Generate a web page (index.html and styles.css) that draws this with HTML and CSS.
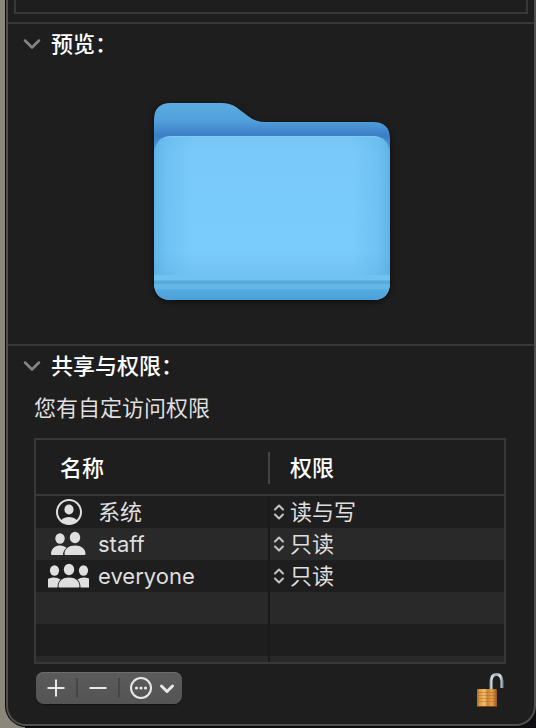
FILE: index.html
```html
<!DOCTYPE html>
<html lang="zh-CN">
<head>
<meta charset="utf-8">
<meta name="viewport" content="width=device-width, initial-scale=1">
<title>简介</title>
<link rel="stylesheet" href="styles.css">
</head>
<body>
<main class="window">
  <div class="previous-box"></div>

  <details class="section preview" open>
    <summary class="section-title">
      <svg class="chevron" viewBox="0 0 18 12" aria-hidden="true"><path d="M2 2.500 9 9.500 16 2.500"/></svg>
      预览：
    </summary>
    <div class="preview-body">
      <svg class="folder" viewBox="0 0 236 197" role="img" aria-label="文件夹">
        <defs>
          <linearGradient id="back" x1="0" y1="0" x2="0" y2="50" gradientUnits="userSpaceOnUse">
            <stop offset="0" stop-color="#5cade1"/><stop offset=".36" stop-color="#509fdb"/><stop offset=".65" stop-color="#3b7ec6"/><stop offset="1" stop-color="#4d9edb"/>
          </linearGradient>
          <linearGradient id="front" x1="0" y1="33" x2="0" y2="197" gradientUnits="userSpaceOnUse">
            <stop offset="0" stop-color="#76c5f3"/><stop offset=".1" stop-color="#79cafa"/><stop offset=".7" stop-color="#7accfc"/><stop offset=".84" stop-color="#73c3f2"/>
          </linearGradient>
          <linearGradient id="sides" x1="0" y1="0" x2="1" y2="0">
            <stop offset="0" stop-color="#3f92cf" stop-opacity=".42"/><stop offset=".05" stop-color="#4399d4" stop-opacity=".2"/><stop offset=".16" stop-color="#4399d4" stop-opacity="0"/><stop offset=".84" stop-color="#4399d4" stop-opacity="0"/><stop offset=".95" stop-color="#4399d4" stop-opacity=".2"/><stop offset="1" stop-color="#3f92cf" stop-opacity=".42"/>
          </linearGradient>
          <linearGradient id="base" x1="0" y1="0" x2="0" y2="1">
            <stop offset="0" stop-color="#58ade0"/><stop offset="1" stop-color="#4b9fd9"/>
          </linearGradient>
          <clipPath id="front-shape"><path d="M0 51Q1 33 18 33H218Q235 33 236 51V179Q236 197 218 197H18Q0 197 0 179Z"/></clipPath>
        </defs>
        <path fill="url(#back)" d="M0 17Q0 0 17 0H67Q76 0 82 4L94 13Q101 19 112 19H219Q236 19 236 36V179Q236 197 218 197H18Q0 197 0 179Z"/>
        <g clip-path="url(#front-shape)">
          <rect y="33" width="236" height="164" fill="url(#front)"/>
          <rect y="172" width="236" height="5" fill="#70c3f0"/>
          <rect y="177" width="236" height="1" fill="#63b4e3"/>
          <rect y="178" width="236" height="3" fill="#58a9dc"/>
          <rect y="181" width="236" height="5" fill="#63b6e6"/>
          <rect y="186" width="236" height="11" fill="url(#base)"/>
          <rect y="33" width="236" height="139" fill="url(#sides)"/>
        </g>
        <path class="folder-edge" d="M10 35Q13 33.500 18 33.500H218Q223 33.500 226 35"/>
      </svg>
    </div>
  </details>

  <details class="section sharing" open>
    <summary class="section-title">
      <svg class="chevron" viewBox="0 0 18 12" aria-hidden="true"><path d="M2 2.500 9 9.500 16 2.500"/></svg>
      共享与权限：
    </summary>
    <div class="sharing-body">
      <p class="note">您有自定访问权限</p>
      <table class="permissions">
        <thead>
          <tr><th scope="col">名称</th><th scope="col">权限</th></tr>
        </thead>
        <tbody>
          <tr>
            <td><div class="user">
              <svg class="user-icon" viewBox="0 0 42 28" aria-hidden="true">
                <defs><clipPath id="disc"><circle cx="21" cy="14" r="12"/></clipPath></defs>
                <circle class="ring" cx="21" cy="14" r="12"/>
                <ellipse cx="21" cy="11.500" rx="4.600" ry="5"/>
                <ellipse cx="21" cy="25" rx="9" ry="6" clip-path="url(#disc)"/>
              </svg>
              系统</div></td>
            <td><div class="access">
              <svg class="arrows" viewBox="0 0 12 18" aria-hidden="true"><path d="M2 6.500 6 2.500 10 6.500M2 11.500 6 15.500 10 11.500"/></svg>
              <select aria-label="系统的权限"><option>读与写</option><option>只读</option></select>
            </div></td>
          </tr>
          <tr>
            <td><div class="user">
              <svg class="user-icon" viewBox="0 0 42 28" aria-hidden="true">
                <ellipse cx="12" cy="8.500" rx="4.700" ry="5.200"/>
                <path d="M3 24C3 18 8 15.500 12 15.500C15 15.500 17 16.500 18.500 18C16 20 15 22 15 25H4Q3 25 3 24Z"/>
                <ellipse cx="27" cy="7.500" rx="5.200" ry="5.800"/>
                <path d="M16.500 24C16.500 18.500 21 15.500 27 15.500S37.500 18.500 37.500 24Q37.500 25 36.500 25H17.500Q16.500 25 16.500 24Z"/>
              </svg>
              staff</div></td>
            <td><div class="access">
              <svg class="arrows" viewBox="0 0 12 18" aria-hidden="true"><path d="M2 6.500 6 2.500 10 6.500M2 11.500 6 15.500 10 11.500"/></svg>
              <select aria-label="staff 的权限"><option>只读</option><option>读与写</option></select>
            </div></td>
          </tr>
          <tr>
            <td><div class="user">
              <svg class="user-icon" viewBox="0 0 42 28" aria-hidden="true">
                <ellipse cx="6.500" cy="8.500" rx="4.600" ry="5.200"/>
                <path d="M0 17C4 14.800 9 15 12.500 17.500C10.500 19.500 9.500 22 9.500 25.500H0Z"/>
                <ellipse cx="35.500" cy="8.500" rx="4.600" ry="5.200"/>
                <path d="M41 16.500C37 14.800 33 15 29.500 17.500C31.500 19.500 32.500 22 32.500 25.500H41Z"/>
                <ellipse cx="21" cy="7.500" rx="5.200" ry="5.800"/>
                <path d="M10.500 24.500C10.500 18.500 15 15.500 21 15.500S31.500 18.500 31.500 24.500Q31.500 25.500 30.500 25.500H11.500Q10.500 25.500 10.500 24.500Z"/>
              </svg>
              everyone</div></td>
            <td><div class="access">
              <svg class="arrows" viewBox="0 0 12 18" aria-hidden="true"><path d="M2 6.500 6 2.500 10 6.500M2 11.500 6 15.500 10 11.500"/></svg>
              <select aria-label="everyone 的权限"><option>只读</option><option>读与写</option></select>
            </div></td>
          </tr>
          <tr><td></td><td></td></tr>
          <tr><td></td><td></td></tr>
          <tr class="cut-row"><td></td><td></td></tr>
        </tbody>
      </table>

      <div class="footer">
        <div class="toolbar">
          <button type="button" aria-label="添加"><svg class="plus" viewBox="0 0 18 18" aria-hidden="true"><path d="M9 .5V17.500M.5 9H17.500"/></svg></button>
          <button type="button" aria-label="移除"><svg class="plus" viewBox="0 0 18 18" aria-hidden="true"><path d="M.5 9H17.500"/></svg></button>
          <button type="button" class="more" aria-label="操作">
            <svg viewBox="0 0 46 24" aria-hidden="true">
              <circle class="line" cx="12" cy="12" r="10"/>
              <circle cx="7.500" cy="12" r="1.600"/><circle cx="12" cy="12" r="1.600"/><circle cx="16.500" cy="12" r="1.600"/>
              <path class="bold" d="M32.500 10 38 15.500 43.500 10"/>
            </svg>
          </button>
        </div>
        <button type="button" class="lock" aria-label="锁定">
          <svg viewBox="0 0 28 36" aria-hidden="true">
            <defs>
              <linearGradient id="brass" x1="0" y1="0" x2="1" y2="0">
                <stop offset="0" stop-color="#a9662b"/><stop offset=".12" stop-color="#dc943e"/><stop offset=".38" stop-color="#f3bd69"/><stop offset=".52" stop-color="#c98334"/><stop offset=".75" stop-color="#e6a24b"/><stop offset="1" stop-color="#8f5320"/>
              </linearGradient>
              <linearGradient id="steel" x1="13" y1="0" x2="27" y2="0" gradientUnits="userSpaceOnUse">
                <stop offset="0" stop-color="#6f7f89"/><stop offset=".2" stop-color="#dbe4e9"/><stop offset=".5" stop-color="#93a2ac"/><stop offset=".8" stop-color="#e0e8ec"/><stop offset="1" stop-color="#70818b"/>
              </linearGradient>
            </defs>
            <path class="shackle" d="M15 18V9Q15.500 2.500 20.500 2.500T26 9V16"/>
            <rect x="1" y="17" width="20" height="18" rx="1" fill="url(#brass)"/>
            <path class="grooves" d="M2 20.500H20M2 23.500H20M2 26.500H20M2 29.500H20"/>
            <path class="lock-base" d="M1.500 34.500H20.500"/>
          </svg>
        </button>
      </div>
    </div>
  </details>
</main>
</body>
</html>
```
FILE: styles.css
```css
:root {
  --panel: #1e1e1e;
  --stripe: #292929;
  --line: #383838;
  --text: #dfdfdf;
}

* {
  box-sizing: border-box;
}

body {
  margin: 0;
  padding: 0 0 2px 6px;
  background:
    linear-gradient(to right, #8b887b 25px, #0d0d12 25px);
  color: var(--text);
  font: 22px/32px Inter, "Noto Sans CJK SC", sans-serif;
}

.window {
  background: var(--panel);
  border: solid #505050;
  border-width: 0 2px 2px;
  border-radius: 0 0 20px 20px;
  box-shadow: 0 0 0 1px #080808;
}

.previous-box {
  height: 14px;
  margin: 0 6px 8px;
  border: solid var(--line);
  border-width: 0 2px 2px;
}

.section {
  border-top: 2px solid var(--line);
}

.section-title {
  display: flex;
  align-items: center;
  gap: 10px;
  padding: 4px 15px;
  color: #fff;
  font-weight: 500;
  list-style: none;
}

.chevron {
  width: 18px;
  height: 12px;
  fill: none;
  stroke: #858585;
  stroke-width: 2.5;
  stroke-linecap: round;
  stroke-linejoin: round;
}

.preview-body {
  display: flex;
  justify-content: center;
  padding: 39px 0 44px 2px;
}

.folder {
  width: 236px;
  height: 197px;
  filter: drop-shadow(0 2px 3px #0008);
}

.folder-edge {
  fill: none;
  stroke: #86d0f8;
  stroke-opacity: .6;
}

.sharing-body {
  padding: 6px 28px 20px 26px;
}

.note {
  margin: 0 0 14px;
}

.permissions {
  width: 100%;
  table-layout: fixed;
  border: 2px solid var(--line);
  border-spacing: 0;
}

.permissions th {
  height: 56px;
  padding: 2px 0 0 24px;
  border-bottom: 2px solid var(--line);
  color: #fff;
  font-weight: 500;
  text-align: left;
}

.permissions th + th {
  padding-left: 22px;
  background: linear-gradient(#444, #444) 0 12px / 2px 32px no-repeat;
}

.permissions th:first-child {
  width: 232px;
}

.permissions td {
  height: 32px;
  padding: 0;
}

.permissions td + td {
  border-left: 2px solid #191919;
}

.permissions tbody tr:nth-child(even) {
  background: var(--stripe);
}

.permissions .cut-row td {
  height: 6px;
}

.user {
  display: flex;
  align-items: center;
  gap: 8px;
  padding-left: 12px;
}

.user-icon {
  width: 42px;
  height: 28px;
  fill: var(--text);
}

.user-icon .ring {
  fill: none;
  stroke: var(--text);
  stroke-width: 2;
}

.access {
  display: flex;
  align-items: center;
  gap: 5px;
  padding-left: 3px;
}

.arrows {
  width: 12px;
  height: 18px;
  fill: none;
  stroke: #c4c4c4;
  stroke-width: 2;
  stroke-linecap: round;
  stroke-linejoin: round;
}

select {
  appearance: none;
  flex: 1;
  height: 32px;
  margin: 0;
  padding: 0;
  border: 0;
  background: none;
  color: inherit;
  font: inherit;
}

button {
  display: flex;
  align-items: center;
  justify-content: center;
  padding: 0;
  border: 0;
  background: none;
  color: inherit;
}

.footer {
  display: flex;
  justify-content: space-between;
  align-items: flex-start;
  height: 40px;
  padding: 8px 2px 0;
}

.toolbar {
  display: flex;
  height: 32px;
  border-radius: 8px;
  background: linear-gradient(#5b5b5b, #545454);
  box-shadow: inset 0 1px #6c6c6c, 0 1px 1px #0006;
}

.toolbar button {
  width: 42px;
  padding-right: 2px;
  background: linear-gradient(#464646, #464646) right center / 2px 20px no-repeat;
}

.toolbar .more {
  width: 62px;
  padding: 0 0 0 2px;
  background: none;
}

.toolbar svg {
  fill: #e8e8e8;
}

.plus {
  width: 18px;
  height: 18px;
  stroke: #e8e8e8;
  stroke-width: 2;
}

.more svg {
  width: 46px;
  height: 24px;
}

.more .line,
.more .bold {
  fill: none;
  stroke: #e8e8e8;
  stroke-width: 2;
}

.more .bold {
  stroke-width: 3;
  stroke-linecap: round;
  stroke-linejoin: round;
}

.lock svg {
  width: 28px;
  height: 36px;
}

.shackle {
  fill: none;
  stroke: url(#steel);
  stroke-width: 3;
}

.grooves {
  stroke: #a8692b;
  stroke-opacity: .45;
}

.lock-base {
  stroke: #7c4519;
}
```
